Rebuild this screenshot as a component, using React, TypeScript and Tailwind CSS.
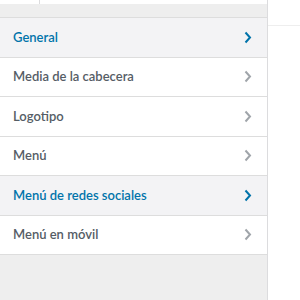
type Section = {
  title: string
  active?: boolean
}

const sections: Section[] = [
  { title: 'General', active: true },
  { title: 'Media de la cabecera' },
  { title: 'Logotipo' },
  { title: 'Menú' },
  { title: 'Menú de redes sociales', active: true },
  { title: 'Menú en móvil' },
]

const Chevron = ({ className }: { className: string }) => (
  <svg width="8" height="13" viewBox="0 0 8 13" className={className} fill="none">
    <path d="M1.5 1.5 L6 6.5 L1.5 11.5" stroke="currentColor" strokeWidth="2" />
  </svg>
)

export default function App() {
  return (
    <div className="flex h-[300px] w-[300px] overflow-hidden bg-white font-['Lato',sans-serif]">
      <div className="flex w-[268px] shrink-0 flex-col border-r border-[#dcdcde] bg-[#eeeeee]">
        {/* header stub */}
        <div className="flex h-[4px] bg-white">
          <div className="w-[40px] border-r border-[#dcdcde]" />
        </div>
        <div className="h-[14px] border-b border-[#dddddd]" />

        <ul>
          {sections.map((s) => (
            <li
              key={s.title}
              className={
                'flex h-[39.5px] items-center justify-between border-b border-[#dddddd] pr-[15px] pl-[13px] text-[13px] font-semibold ' +
                (s.active
                  ? 'bg-[#f3f3f5] text-[#0073aa]'
                  : 'bg-white text-[#555d66]')
              }
            >
              <span>{s.title}</span>
              <Chevron className={s.active ? 'text-[#0073aa]' : 'text-[#a0a5aa]'} />
            </li>
          ))}
        </ul>
      </div>

      <div className="flex-1">
        <div className="h-[26px] border-b border-[#eeeeee]" />
      </div>
    </div>
  )
}
